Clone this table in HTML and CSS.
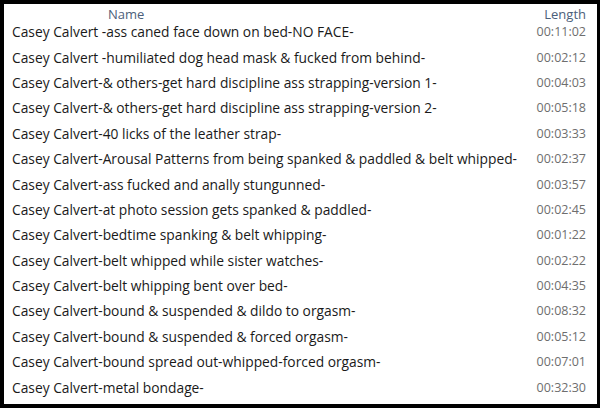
FILE: index.html
```html
<!DOCTYPE html>
<html lang="en">
<head>
  <meta charset="UTF-8">
  <title>Files</title>
  <link rel="stylesheet" href="styles.css">
</head>
<body>
  <div class="list">
    <div class="row head">
      <div class="name">Name</div>
      <div class="len">Length</div>
    </div>
    <div class="row"><div class="name">Casey Calvert -ass caned face down on bed-NO FACE-</div><div class="len">00:11:02</div></div>
    <div class="row"><div class="name">Casey Calvert -humiliated dog head mask &amp; fucked from behind-</div><div class="len">00:02:12</div></div>
    <div class="row"><div class="name">Casey Calvert-&amp; others-get hard discipline ass strapping-version 1-</div><div class="len">00:04:03</div></div>
    <div class="row"><div class="name">Casey Calvert-&amp; others-get hard discipline ass strapping-version 2-</div><div class="len">00:05:18</div></div>
    <div class="row"><div class="name">Casey Calvert-40 licks of the leather strap-</div><div class="len">00:03:33</div></div>
    <div class="row"><div class="name">Casey Calvert-Arousal Patterns from being spanked &amp; paddled &amp; belt whipped-</div><div class="len">00:02:37</div></div>
    <div class="row"><div class="name">Casey Calvert-ass fucked and anally stungunned-</div><div class="len">00:03:57</div></div>
    <div class="row"><div class="name">Casey Calvert-at photo session gets spanked &amp; paddled-</div><div class="len">00:02:45</div></div>
    <div class="row"><div class="name">Casey Calvert-bedtime spanking &amp; belt whipping-</div><div class="len">00:01:22</div></div>
    <div class="row"><div class="name">Casey Calvert-belt whipped while sister watches-</div><div class="len">00:02:22</div></div>
    <div class="row"><div class="name">Casey Calvert-belt whipping bent over bed-</div><div class="len">00:04:35</div></div>
    <div class="row"><div class="name">Casey Calvert-bound &amp; suspended &amp; dildo to orgasm-</div><div class="len">00:08:32</div></div>
    <div class="row"><div class="name">Casey Calvert-bound &amp; suspended &amp; forced orgasm-</div><div class="len">00:05:12</div></div>
    <div class="row"><div class="name">Casey Calvert-bound spread out-whipped-forced orgasm-</div><div class="len">00:07:01</div></div>
    <div class="row"><div class="name">Casey Calvert-metal bondage-</div><div class="len">00:32:30</div></div>
  </div>
</body>
</html>
```

FILE: styles.css
```css
html, body {
  margin: 0;
  height: 100%;
  background-color: #000;
}

body {
  padding: 4px 3px 4px 4px;
  box-sizing: border-box;
  font-family: "Open Sans", sans-serif;
}

.list {
  background-color: #fff;
  height: 100%;
  padding: 5px 11px 0 8px;
  box-sizing: border-box;
  overflow: hidden;
}

.row {
  display: flex;
  justify-content: space-between;
  align-items: center;
  height: 25.4px;
  color: #1a1a1a;
}

.row .name {
  font-size: 13.8px;
}

.row .len {
  font-size: 12.5px;
  color: #6e6e6e;
}

.head {
  height: 10px;
  color: #4c607a;
}

.head .name {
  padding-left: 96px;
  font-size: 13px;
}

.head .len {
  font-size: 13px;
  color: #4c607a;
}
```
